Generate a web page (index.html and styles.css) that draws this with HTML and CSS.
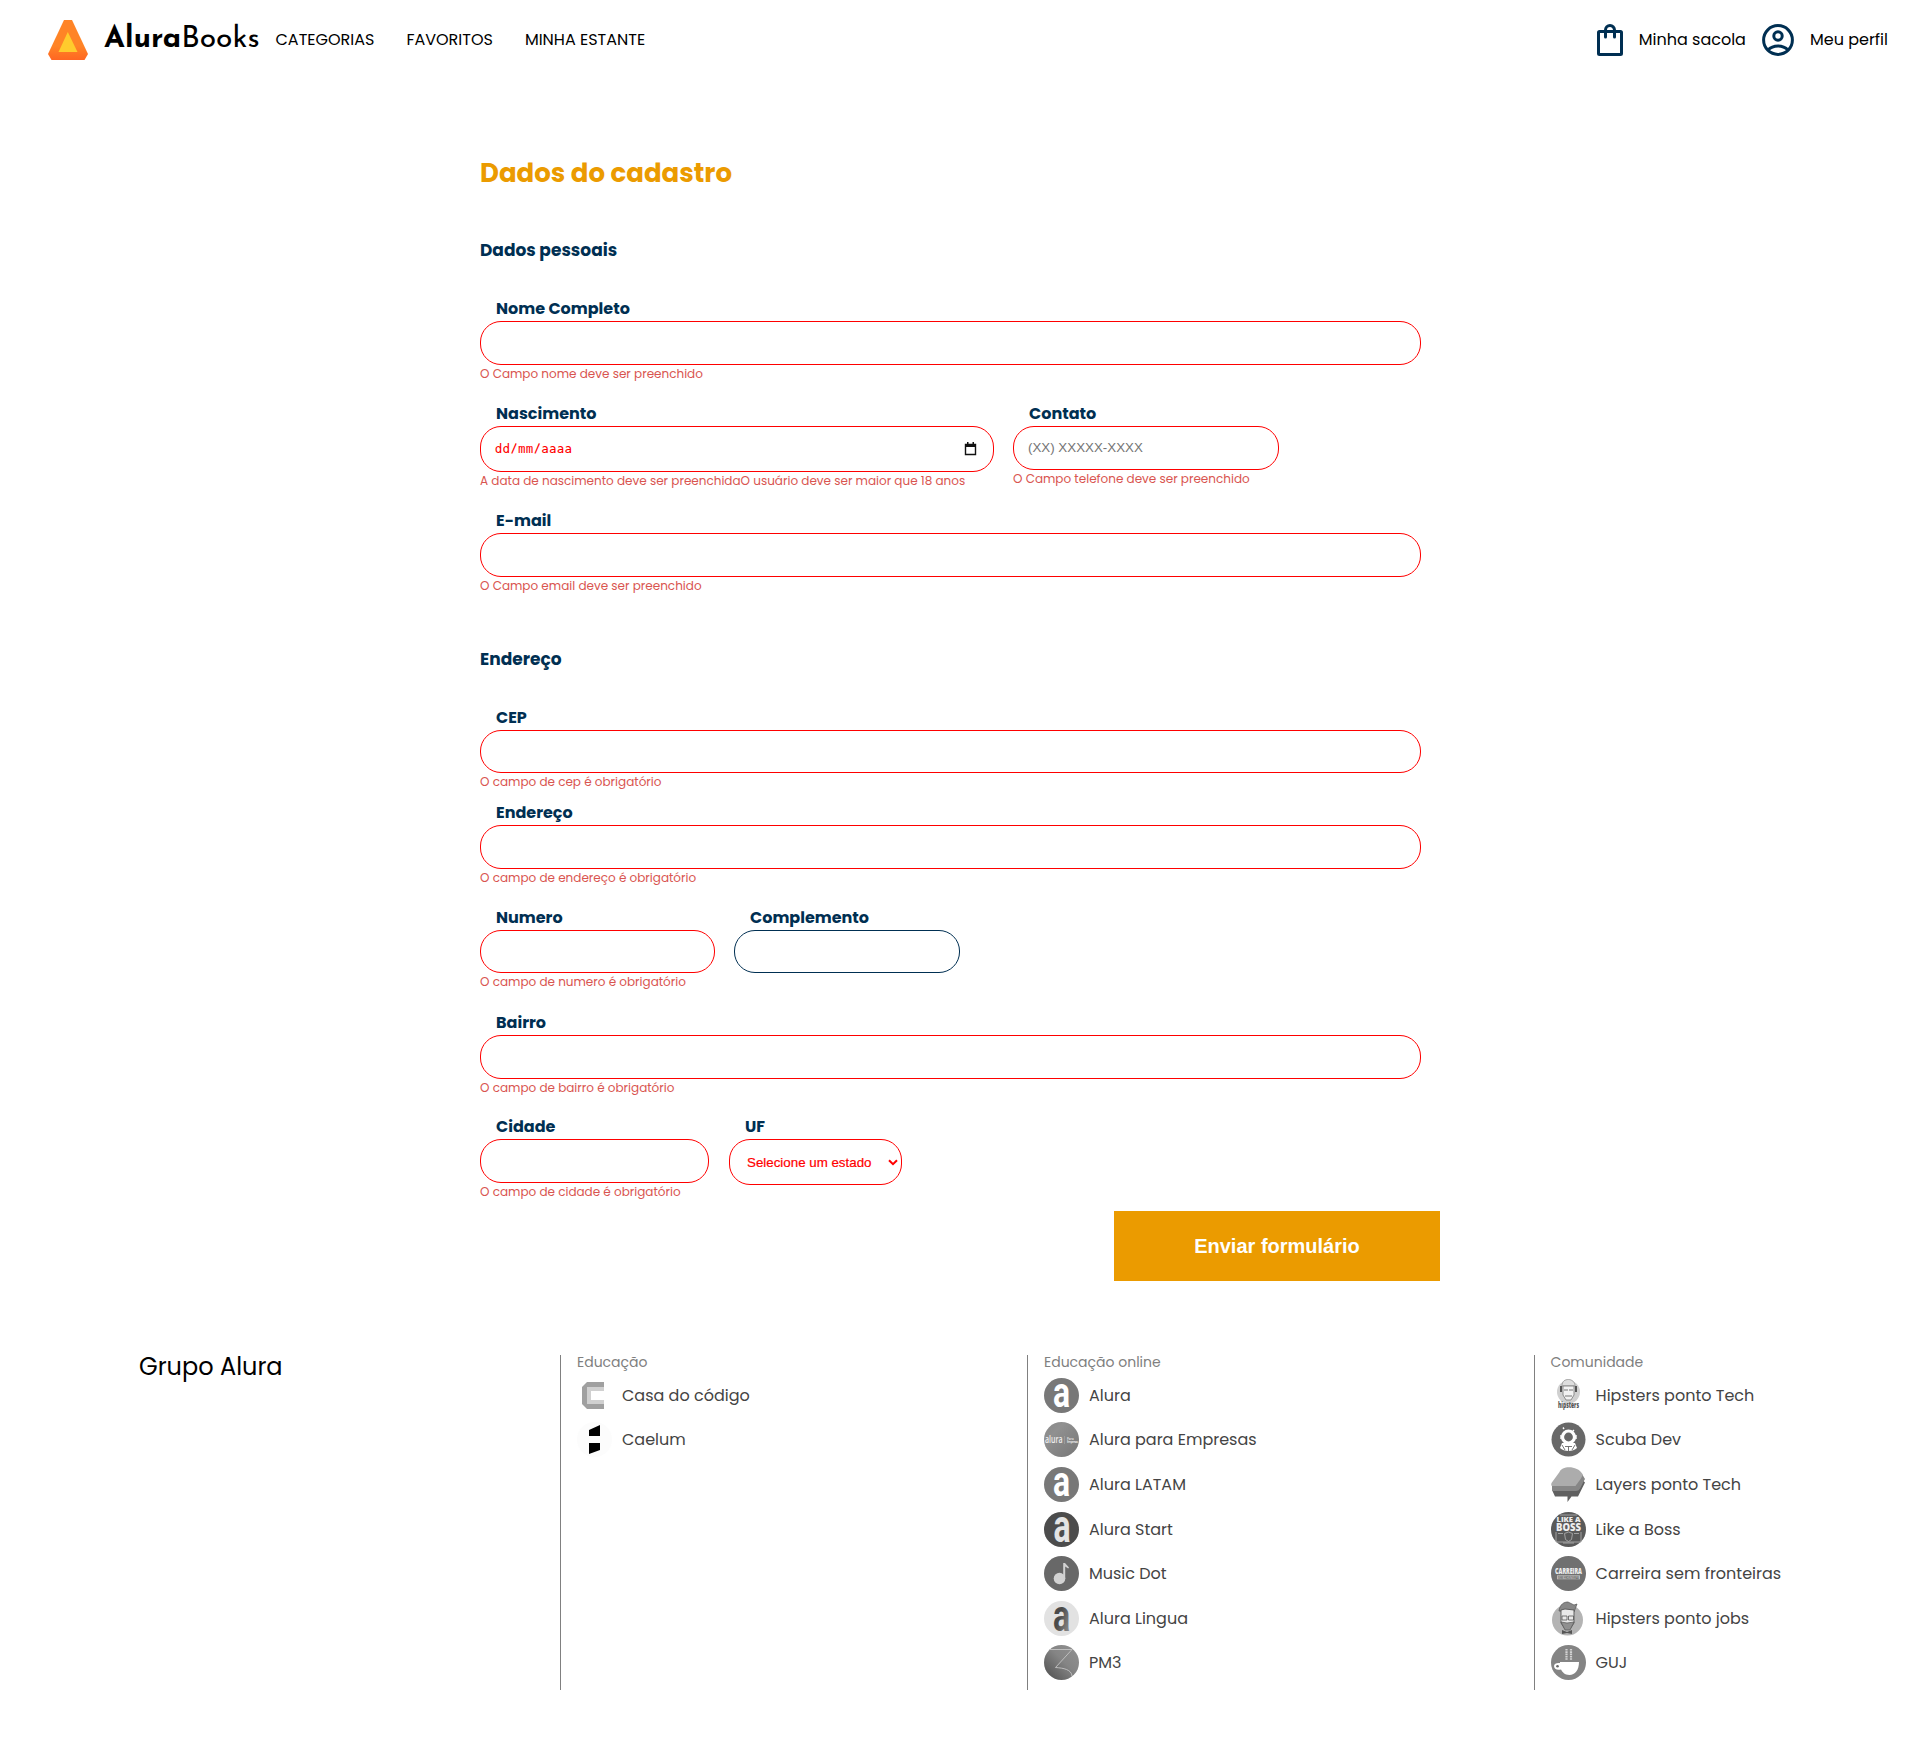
FILE: index.html
```html
<!DOCTYPE html>
<html lang="pt-br">
<head>
<meta charset="utf-8">
<title>AluraBooks</title>
<link rel="stylesheet" href="styles.css">
</head>
<body>
<svg class="defs" width="0" height="0" aria-hidden="true">
  <defs>
    <linearGradient id="brand" x1="0" y1="0" x2="0" y2="1"><stop offset=".65" stop-color="#ff8426"/><stop offset="1" stop-color="#ff6622"/></linearGradient>
    <linearGradient id="fade" x1="1" y1="0" x2="0" y2="1"><stop offset="0" stop-color="#929292"/><stop offset=".45" stop-color="#858585"/><stop offset="1" stop-color="#4c4c4c"/></linearGradient>
    <linearGradient id="soft" x1="0" y1="0" x2="1" y2="1"><stop offset="0" stop-color="#888"/><stop offset=".3" stop-color="#909090"/><stop offset="1" stop-color="#767676"/></linearGradient>
    <linearGradient id="letter" x1="0" y1="0" x2="1" y2="1"><stop offset=".45" stop-color="#4a4a4a"/><stop offset="1" stop-color="#a0a0a0"/></linearGradient>
  </defs>
</svg>
<header class="header">
  <a class="brand">
    <svg width="40" height="40" viewBox="0 0 40 40"><path d="M16 0h8l16 34-3.500 6h-33L0 34z" fill="url(#brand)"/><path d="M19.800 12L29.500 32h-19z" fill="#ffcb2d"/></svg>
    <span class="brand-name"><b>Alura</b>Books</span>
  </a>
  <nav class="nav"><a>CATEGORIAS</a><a>FAVORITOS</a><a>MINHA ESTANTE</a></nav>
  <div class="account">
    <a class="account-link"><svg width="26" height="32" viewBox="3 0 26 32" fill="none" stroke="#002f52" stroke-width="3"><rect x="4.500" y="7.500" width="23" height="23" rx="1"/><path d="M11.500 13V6a4.500 4.500 0 0 1 9 0V13" stroke-linecap="round"/></svg><span>Minha sacola</span></a>
    <a class="account-link"><svg width="32" height="32" viewBox="0 0 32 32" fill="none" stroke="#002f52" stroke-width="3"><circle cx="16" cy="16" r="14.400"/><circle cx="16" cy="12" r="4.200"/><path d="M6 26c5-5.500 15-5.500 20 0"/></svg><span>Meu perfil</span></a>
  </div>
</header>
<main class="form">
  <h1 class="title">Dados do cadastro</h1>
  <section>
    <h2 class="subtitle">Dados pessoais</h2>
    <div class="row"><div class="field wide"><label class="label">Nome Completo</label><input class="input"><span class="error">O Campo nome deve ser preenchido</span></div></div>
    <div class="row contact">
      <div class="field birth"><label class="label">Nascimento</label><div class="control"><input class="input date" value="dd/mm/aaaa"><svg class="calendar" width="13" height="14" viewBox="0 0 13 14"><path d="M1.500 2.500h10v10h-10z" fill="none" stroke="#111" stroke-width="1.400"/><path d="M1 2h11v3H1zM3 0h1.500v3H3zM8.500 0H10v3H8.500z" fill="#111"/></svg></div><span class="error">A data de nascimento deve ser preenchidaO usuário deve ser maior que 18 anos</span></div>
      <div class="field phone"><label class="label">Contato</label><input class="input" placeholder="(XX) XXXXX-XXXX"><span class="error">O Campo telefone deve ser preenchido</span></div>
    </div>
    <div class="row"><div class="field wide"><label class="label">E-mail</label><input class="input"><span class="error">O Campo email deve ser preenchido</span></div></div>
  </section>
  <section class="address">
    <h2 class="subtitle">Endereço</h2>
    <div class="row tight"><div class="field wide"><label class="label">CEP</label><input class="input"><span class="error">O campo de cep é obrigatório</span></div></div>
    <div class="row"><div class="field wide"><label class="label">Endereço</label><input class="input"><span class="error">O campo de endereço é obrigatório</span></div></div>
    <div class="row unit">
      <div class="field number"><label class="label">Numero</label><input class="input"><span class="error">O campo de numero é obrigatório</span></div>
      <div class="field complement"><label class="label">Complemento</label><input class="input optional"></div>
    </div>
    <div class="row district"><div class="field wide"><label class="label">Bairro</label><input class="input"><span class="error">O campo de bairro é obrigatório</span></div></div>
    <div class="row last">
      <div class="field city"><label class="label">Cidade</label><input class="input"><span class="error">O campo de cidade é obrigatório</span></div>
      <div class="field state"><label class="label">UF</label><div class="control"><select class="input select"><option>Selecione um estado</option></select><svg class="chevron" width="10" height="7" viewBox="0 0 10 7"><path d="M1 1.200l4 4 4-4" fill="none" stroke="red" stroke-width="2"/></svg></div></div>
    </div>
  </section>
  <button class="submit">Enviar formulário</button>
</main>
<footer class="footer">
  <h3 class="group">Grupo Alura</h3>
  <section class="links"><h4 class="links-title">Educação</h4>
    <a class="link"><svg class="icon" viewBox="0 0 35 35"><path d="M10 4h17v27H10l-5-5V9z" fill="#a0a0a0"/><path d="M10 9h17v17H10z" fill="#d0d0d0"/><path d="M14 13h13v9H14z" fill="#fff"/></svg><span>Casa do código</span></a>
    <a class="link"><svg class="icon" viewBox="0 0 35 35"><circle cx="17.500" cy="17.500" r="17.500" fill="#fcfcfc"/><path d="M12 8l11-5v11H12zM12 21h11v7l-11 4z"/></svg><span>Caelum</span></a>
  </section>
  <section class="links"><h4 class="links-title">Educação online</h4>
    <a class="link"><svg class="icon" viewBox="0 0 35 35"><circle cx="17.500" cy="17.500" r="17.500" fill="#787878"/><text class="mark" transform="translate(17.500 28.500) scale(.76 1)" fill="#fff">a</text></svg><span>Alura</span></a>
    <a class="link"><svg class="icon" viewBox="0 0 35 35"><circle cx="17.500" cy="17.500" r="17.500" fill="url(#soft)"/><text class="mini" x="1" y="20.500" font-size="10" textLength="17.500" lengthAdjust="spacingAndGlyphs">alura</text><path d="M20.500 14v8" stroke="#aaa" stroke-width=".6"/><text class="mini" x="23" y="17.500" font-size="3">Para</text><text class="mini" x="23" y="21" font-size="3" textLength="11">Empresas</text></svg><span>Alura para Empresas</span></a>
    <a class="link"><svg class="icon" viewBox="0 0 35 35"><circle cx="17.500" cy="17.500" r="17.500" fill="#787878"/><text class="mark" transform="translate(17.500 28.500) scale(.76 1)" fill="#fff">a</text></svg><span>Alura LATAM</span></a>
    <a class="link"><svg class="icon" viewBox="0 0 35 35"><circle cx="17.500" cy="17.500" r="17.500" fill="#4c4c4c"/><text class="mark" transform="translate(18 30) scale(.76 1.100)" fill="#e4e4e4">a</text></svg><span>Alura Start</span></a>
    <a class="link"><svg class="icon" viewBox="0 0 35 35"><circle cx="17.500" cy="17.500" r="17.500" fill="#686868"/><circle cx="15.500" cy="22.500" r="5.800" fill="#d2d2d2"/><path d="M19.200 7h1.800l4 4.500-.8 1-3-2V23h-2z" fill="#d2d2d2"/></svg><span>Music Dot</span></a>
    <a class="link"><svg class="icon" viewBox="0 0 35 35"><circle cx="17.500" cy="17.500" r="17.500" fill="#e2e2e2"/><text class="mark" transform="translate(17.500 30) scale(.76 1.060)" fill="url(#letter)">a</text></svg><span>Alura Lingua</span></a>
    <a class="link"><svg class="icon" viewBox="0 0 35 35"><circle cx="17.500" cy="17.500" r="17.500" fill="url(#fade)"/><path d="M5 4.500h23L11.500 22.500c8 .5 16 2 16.500 8.500" fill="none" stroke="#c4c4c4" stroke-width=".9"/></svg><span>PM3</span></a>
  </section>
  <section class="links"><h4 class="links-title">Comunidade</h4>
    <a class="link"><svg class="icon" viewBox="0 0 35 35"><circle cx="17.500" cy="14" r="11.500" fill="#d0d0d0"/><path d="M11 8c0-5 3-6.500 6.500-6.500S24 4 24 8z" fill="#dedede" stroke="#888" stroke-width=".7"/><path d="M12 8h11v9l-3 5h-5l-3-5z" fill="#f2f2f2" stroke="#777" stroke-width=".8"/><path d="M10 8v6M25 8v6" stroke="#555" stroke-width="2"/><path d="M13 12h4m1 0h4M14 18h7" stroke="#777"/><text x="7" y="30" class="mini dark bold" font-size="8" textLength="21" lengthAdjust="spacingAndGlyphs">hipsters</text></svg><span>Hipsters ponto Tech</span></a>
    <a class="link"><svg class="icon" viewBox="0 0 35 35"><circle cx="17.500" cy="17.500" r="17" fill="#686868"/><circle cx="17.500" cy="15" r="6" fill="none" stroke="#fff" stroke-width="3.200"/><path d="M12 5.500l1 1.500M23 8l-2 2M10 13v4M25 13v4" stroke="#fff" stroke-width="1.400"/><path d="M11 21h13l2 5c-4 4-13 4-17 0z" fill="#fff"/><path d="M14 24.500h7M17.500 24.500V29M11 23l3 5M24 23l-3 5" stroke="#686868" stroke-width=".9"/></svg><span>Scuba Dev</span></a>
    <a class="link"><svg class="icon" viewBox="0 0 35 35"><path d="M1 23l3 6.500h12.500V35l4-5.500H27l7-14-3-3-28 10z" fill="#606060"/><path d="M1 18v6h24c4 0 4-3 9-12l-3-5z" fill="#868686"/><path d="M8.500 5c2-6.500 18-7 23 2 1 2-4 8-7 12H2c-2 0-2-1-1.500-3z" fill="#acacac"/></svg><span>Layers ponto Tech</span></a>
    <a class="link"><svg class="icon" viewBox="0 0 35 35"><circle cx="17.500" cy="17.500" r="17.500" fill="#5a5a5a"/><path d="M5 20v10h25V20M7 21.500h5m11 0h5M9 3h17M12 31h11M17.500 20l-4 1.500 1 6 3 2 3-2 1-6z" fill="none" stroke="#aaa" stroke-width=".9"/><text class="mini bold" x="5.500" y="10" font-size="6" textLength="24" lengthAdjust="spacingAndGlyphs">LIKE A</text><text class="mini bold" x="5" y="18.500" font-size="10" textLength="25" lengthAdjust="spacingAndGlyphs">BOSS</text></svg><span>Like a Boss</span></a>
    <a class="link"><svg class="icon" viewBox="0 0 35 35"><circle cx="17.500" cy="17.500" r="17.500" fill="#707070"/><text class="mini bold" x="4" y="17.800" font-size="8" textLength="27" lengthAdjust="spacingAndGlyphs">CARREIRA</text><path d="M6 19.300h23v4H6z" fill="#bbb"/><text class="mini dark" x="7" y="22.600" font-size="4" textLength="21" lengthAdjust="spacingAndGlyphs">SEM FRONTEIRAS</text></svg><span>Carreira sem fronteiras</span></a>
    <a class="link"><svg class="icon" viewBox="0 0 35 35"><circle cx="16.500" cy="19" r="15.500" fill="#b4b4b4"/><path d="M8 10C9 3 13 1 17 1l6 3 3-1-3 8z" fill="#888" stroke="#555" stroke-width=".7"/><path d="M10 9l4-1 9 1v13l-4 6h-5l-4-6z" fill="#e8e8e8" stroke="#555" stroke-width=".9"/><path d="M11 15h5v4h-5zM17.500 15h5v4h-5z" fill="none" stroke="#555" stroke-width=".8"/><path d="M10 21l6 1 7-1-4 8h-5z" fill="#909090" stroke="#555" stroke-width=".7"/><path d="M11 29l5 2 5-2v4l-5-1-5 1z" fill="#555"/></svg><span>Hipsters ponto jobs</span></a>
    <a class="link"><svg class="icon" viewBox="0 0 35 35"><circle cx="17.500" cy="17.500" r="17.500" fill="#848484"/><path d="M9 17h19c0 8-4 13-9.500 13-5 0-7-3-8.500-5.500-4 1-7-.5-7-3.500 0-2.500 3-3.500 6-3z" fill="#fff"/><circle cx="6.500" cy="21.300" r="1.300" fill="#666"/><path d="M15.500 4v11M20 4v11" stroke="#d4d4d4" stroke-width="2.200" stroke-dasharray="1.600 .7"/></svg><span>GUJ</span></a>
  </section>
</footer>
</body>
</html>
```
FILE: styles.css
```css
* { box-sizing: border-box; }
body { margin: 0; height: 1738px; background: #fff; color: #000; font-family: Poppins, Inter, sans-serif; font-size: 16px; }
.defs { position: absolute; }
h1, h2, h3, h4 { margin: 0; }
.header { display: flex; align-items: center; height: 80px; padding: 0 32px 0 48px; line-height: 24px; }
.brand { display: flex; align-items: center; gap: 16px; width: 227.500px; }
.brand svg { flex: none; }
.brand-name { font-family: "Josefin Sans", Poppins, sans-serif; font-size: 30px; line-height: 40px; white-space: nowrap; }
.nav { display: flex; gap: 32px; white-space: nowrap; }
.account { display: flex; gap: 16px; margin-left: auto; white-space: nowrap; }
.account-link { display: flex; align-items: center; gap: 16px; }
.form { width: 960px; margin: 72.300px auto 0; }
.title { height: 84.100px; color: #eb9b00; font-size: 26px; line-height: 42px; }
.subtitle { margin-bottom: 33px; color: #002f52; font-size: 17px; line-height: 28px; }
.address { margin-top: 51px; }
.address .subtitle { margin-bottom: 32.700px; }
.row { display: flex; gap: 19px; margin-bottom: 20px; }
.row.contact { margin-bottom: 20.400px; }
.row.tight { margin-bottom: 10.500px; }
.row.unit { margin-bottom: 20.500px; }
.row.district { margin-bottom: 19.500px; }
.row.last { margin-bottom: 11px; }
.field { display: flex; flex-direction: column; white-space: nowrap; }
.wide { width: 941px; }
.birth { width: 514px; }
.phone { width: 266px; }
.number { width: 235px; }
.complement { width: 226px; }
.city { width: 229px; }
.state { width: 173px; margin-left: 1px; }
.label { margin: 0 16px; color: #002f52; font-weight: 700; line-height: 24px; }
.input { display: block; width: 100%; height: 43.600px; padding: 0 14px; border: 1px solid red; border-radius: 21px; background: #fff; font: 13.333px "Liberation Sans", sans-serif; outline: 0; }
.input::placeholder { color: #757575; opacity: 1; }
.optional { border-color: #002f52; }
.error { height: 17.170px; color: #d95550; font-size: 12px; line-height: 17px; }
.control { position: relative; }
.date, .select { height: 45.600px; color: red; }
.date { font: 500 14px Inconsolata, "DejaVu Sans Mono", monospace; letter-spacing: .75px; }
.calendar { position: absolute; right: 17px; top: 16px; }
.select { padding-left: 17px; appearance: none; -webkit-text-stroke: .2px red; }
.chevron { position: absolute; right: 4px; top: 20px; }
.submit { display: block; width: 326px; height: 70px; margin-left: auto; padding: 2px 0 0; border: 0; background: #eb9b00; color: #fff; font: 700 20px "Liberation Sans", sans-serif; }
.footer { display: grid; grid-template-columns: 421px 467px 506.600px 1fr; height: 334.600px; margin-top: 74px; padding-left: 139px; }
.group { font-size: 24px; font-weight: 400; line-height: 23px; }
.links { padding-left: 16px; border-left: 1px solid #808080; }
.links-title { color: #808080; font-size: 14px; font-weight: 400; line-height: 14px; margin-bottom: 8.800px; }
.link { display: flex; align-items: center; gap: 10px; height: 44.600px; padding-bottom: 9.600px; color: #444; white-space: nowrap; }
.icon { flex: none; width: 35px; height: 35px; }
.mark { font: 700 42px Roboto, sans-serif; text-anchor: middle; }
.mini { fill: #eee; font-family: "Open Sans", sans-serif; font-weight: 600; }
.bold { font-weight: 800; }
.dark { fill: #555; }
```
